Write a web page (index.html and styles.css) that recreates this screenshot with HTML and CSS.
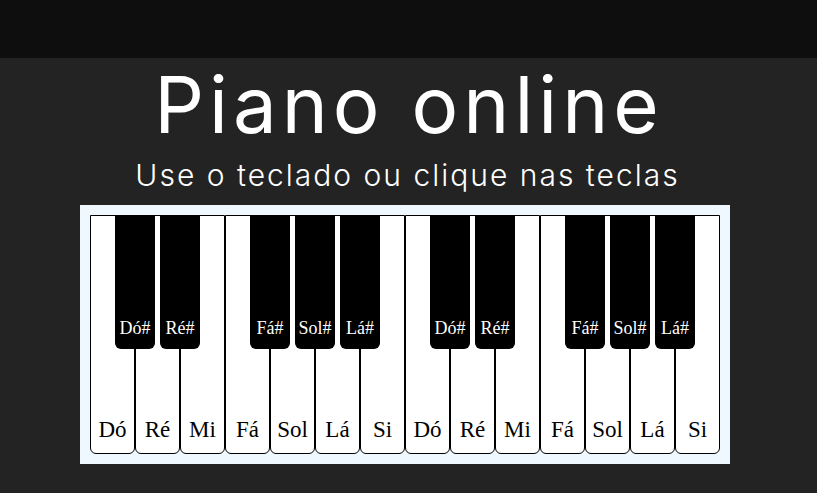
FILE: index.html
```html
<!DOCTYPE html>
<html lang="pt">
<head>
<meta charset="utf-8">
<title>Piano online</title>
<link rel="stylesheet" href="styles.css">
</head>
<body>
<header class="topbar"></header>
<main class="content">
  <h1 class="title">Piano online</h1>
  <p class="subtitle">Use o teclado ou clique nas teclas</p>
  <div class="piano">
    <div class="key white"><span class="label">Dó</span><div class="key black"><span class="label">Dó#</span></div></div>
    <div class="key white"><span class="label">Ré</span><div class="key black"><span class="label">Ré#</span></div></div>
    <div class="key white"><span class="label">Mi</span></div>
    <div class="key white"><span class="label">Fá</span><div class="key black"><span class="label">Fá#</span></div></div>
    <div class="key white"><span class="label">Sol</span><div class="key black"><span class="label">Sol#</span></div></div>
    <div class="key white"><span class="label">Lá</span><div class="key black"><span class="label">Lá#</span></div></div>
    <div class="key white"><span class="label">Si</span></div>
    <div class="key white"><span class="label">Dó</span><div class="key black"><span class="label">Dó#</span></div></div>
    <div class="key white"><span class="label">Ré</span><div class="key black"><span class="label">Ré#</span></div></div>
    <div class="key white"><span class="label">Mi</span></div>
    <div class="key white"><span class="label">Fá</span><div class="key black"><span class="label">Fá#</span></div></div>
    <div class="key white"><span class="label">Sol</span><div class="key black"><span class="label">Sol#</span></div></div>
    <div class="key white"><span class="label">Lá</span><div class="key black"><span class="label">Lá#</span></div></div>
    <div class="key white"><span class="label">Si</span></div>
  </div>
</main>
</body>
</html>
```
FILE: styles.css
```css
html, body {
  margin: 0;
  padding: 0;
}
body {
  background: #232323;
  color: #ffffff;
  font-family: Inter, "Open Sans", sans-serif;
  min-height: 493px;
}
.topbar {
  height: 58px;
  background: #0e0e0e;
}
.content {
  display: flex;
  flex-direction: column;
  align-items: center;
  padding-right: 7px;
}
.title {
  margin: 5px -4px 0 4px;
  font-size: 78px;
  font-weight: 400;
  line-height: 84px;
  letter-spacing: 5px;
}
.subtitle {
  margin: 8px -2px 0 3px;
  font-size: 30px;
  font-weight: 300;
  line-height: 40px;
  letter-spacing: 2px;
}
.piano {
  display: flex;
  margin-top: 10px;
  padding: 10px;
  background: #f0f8ff;
}
.key.white {
  position: relative;
  width: 43px;
  height: 237px;
  background: #ffffff;
  border: 1px solid #000000;
  border-radius: 0 0 6px 6px;
  display: flex;
  align-items: flex-end;
  justify-content: center;
  font-family: "Liberation Serif", "Times New Roman", serif;
  color: #000000;
  font-size: 23px;
}
.key.white > .label {
  padding-bottom: 10px;
}
.key.black {
  position: absolute;
  top: -1px;
  right: -21px;
  z-index: 2;
  width: 40px;
  height: 134px;
  background: #000000;
  border-radius: 0 0 6px 6px;
  display: flex;
  align-items: flex-end;
  justify-content: center;
  color: #ffffff;
  font-size: 18px;
}
.key.black > .label {
  padding-bottom: 10px;
}
```
